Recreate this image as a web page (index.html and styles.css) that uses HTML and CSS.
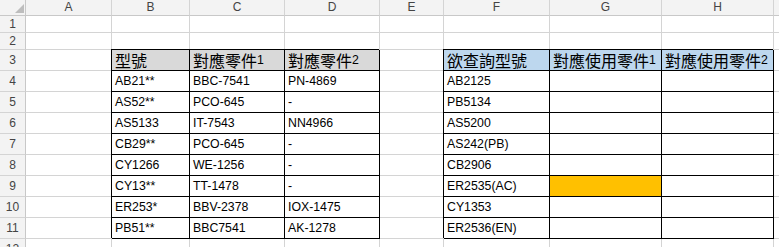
FILE: index.html
```html
<!DOCTYPE html>
<html lang="zh-Hant">
<head>
<meta charset="utf-8">
<title>Sheet</title>
<link rel="stylesheet" href="styles.css">
</head>
<body>
<div class="sheet">
  <!-- column header row -->
  <div class="corner"><svg width="9" height="9" viewBox="0 0 9 9"><polygon points="9,0 9,9 0,9" fill="#bdbdbd"/></svg></div>
  <div class="ch">A</div><div class="ch">B</div><div class="ch">C</div><div class="ch">D</div><div class="ch">E</div><div class="ch">F</div><div class="ch">G</div><div class="ch">H</div><div class="ch"></div>

  <!-- row 1 -->
  <div class="rh">1</div><div class="c"></div><div class="c"></div><div class="c"></div><div class="c"></div><div class="c"></div><div class="c"></div><div class="c"></div><div class="c"></div><div class="c"></div>
  <!-- row 2 -->
  <div class="rh">2</div><div class="c"></div><div class="c"></div><div class="c"></div><div class="c"></div><div class="c"></div><div class="c"></div><div class="c"></div><div class="c"></div><div class="c"></div>
  <!-- row 3 -->
  <div class="rh">3</div><div class="c"></div>
  <div class="c t grey"><span class="cj">型號</span></div>
  <div class="c t grey"><span class="cj">對應零件</span>1</div>
  <div class="c t grey"><span class="cj">對應零件</span>2</div>
  <div class="c"></div>
  <div class="c t blue"><span class="cj">欲查詢型號</span></div>
  <div class="c t blue"><span class="cj">對應使用零件</span>1</div>
  <div class="c t blue"><span class="cj">對應使用零件</span>2</div>
  <div class="c"></div>
  <!-- row 4 -->
  <div class="rh">4</div><div class="c"></div>
  <div class="c t">AB21**</div><div class="c t">BBC-7541</div><div class="c t">PN-4869</div>
  <div class="c"></div>
  <div class="c t">AB2125</div><div class="c t"></div><div class="c t"></div><div class="c"></div>
  <!-- row 5 -->
  <div class="rh">5</div><div class="c"></div>
  <div class="c t">AS52**</div><div class="c t">PCO-645</div><div class="c t">-</div>
  <div class="c"></div>
  <div class="c t">PB5134</div><div class="c t"></div><div class="c t"></div><div class="c"></div>
  <!-- row 6 -->
  <div class="rh">6</div><div class="c"></div>
  <div class="c t">AS5133</div><div class="c t">IT-7543</div><div class="c t">NN4966</div>
  <div class="c"></div>
  <div class="c t">AS5200</div><div class="c t"></div><div class="c t"></div><div class="c"></div>
  <!-- row 7 -->
  <div class="rh">7</div><div class="c"></div>
  <div class="c t">CB29**</div><div class="c t">PCO-645</div><div class="c t">-</div>
  <div class="c"></div>
  <div class="c t">AS242(PB)</div><div class="c t"></div><div class="c t"></div><div class="c"></div>
  <!-- row 8 -->
  <div class="rh">8</div><div class="c"></div>
  <div class="c t">CY1266</div><div class="c t">WE-1256</div><div class="c t">-</div>
  <div class="c"></div>
  <div class="c t">CB2906</div><div class="c t"></div><div class="c t"></div><div class="c"></div>
  <!-- row 9 -->
  <div class="rh">9</div><div class="c"></div>
  <div class="c t">CY13**</div><div class="c t">TT-1478</div><div class="c t">-</div>
  <div class="c"></div>
  <div class="c t">ER2535(AC)</div><div class="c t orange"></div><div class="c t"></div><div class="c"></div>
  <!-- row 10 -->
  <div class="rh">10</div><div class="c"></div>
  <div class="c t">ER253*</div><div class="c t">BBV-2378</div><div class="c t">IOX-1475</div>
  <div class="c"></div>
  <div class="c t">CY1353</div><div class="c t"></div><div class="c t"></div><div class="c"></div>
  <!-- row 11 -->
  <div class="rh">11</div><div class="c"></div>
  <div class="c t">PB51**</div><div class="c t">BBC7541</div><div class="c t">AK-1278</div>
  <div class="c"></div>
  <div class="c t">ER2536(EN)</div><div class="c t"></div><div class="c t"></div><div class="c"></div>
  <!-- row 12 -->
  <div class="rh">12</div><div class="c"></div><div class="c"></div><div class="c"></div><div class="c"></div><div class="c"></div><div class="c"></div><div class="c"></div><div class="c"></div><div class="c"></div>
</div>
</body>
</html>
```

FILE: styles.css
```css
html, body {
  margin: 0;
  padding: 0;
  background: #ffffff;
}

.sheet {
  display: grid;
  grid-template-columns: 26px 86px 78px 95px 95px 64px 106px 112px 112px 80px;
  grid-template-rows: 16px 17px 17px 21px 21px 21px 21px 21px 21px 21px 21px 21px 21px;
  width: 779px;
  height: 247px;
  overflow: hidden;
  font-family: "Liberation Sans", "Noto Sans CJK TC", sans-serif;
  font-size: 12.3px;
  color: #000;
}

.corner {
  background: #f3f3f3;
  border-right: 1px solid #c8c8c8;
  border-bottom: 1px solid #c8c8c8;
  display: flex;
  justify-content: flex-end;
  align-items: flex-end;
  padding: 0 1px 2px 0;
}

.ch {
  background: #f3f3f3;
  border-right: 1px solid #d4d4d4;
  border-bottom: 1px solid #c8c8c8;
  color: #444;
  font-size: 12px;
  display: flex;
  align-items: center;
  justify-content: center;
  line-height: 15px;
}

.rh {
  background: #f3f3f3;
  border-right: 1px solid #c8c8c8;
  border-bottom: 1px solid #d4d4d4;
  color: #444;
  font-size: 12px;
  display: flex;
  align-items: center;
  justify-content: center;
  line-height: 15px;
}

.c {
  border-right: 1px solid #d4d4d4;
  border-bottom: 1px solid #d4d4d4;
  display: flex;
  align-items: flex-end;
  padding: 0 0 2px 3px;
  line-height: 15px;
  white-space: nowrap;
}

.t {
  border-right-color: #000;
  border-bottom-color: #000;
  box-shadow: -1px -1px 0 #000;
}

.cj {
  font-family: "Noto Sans CJK TC", sans-serif;
  font-size: 16px;
}

.grey {
  background: #d9d9d9;
}

.blue {
  background: #bdd7ee;
}

.orange {
  background: #ffc000;
}
```
